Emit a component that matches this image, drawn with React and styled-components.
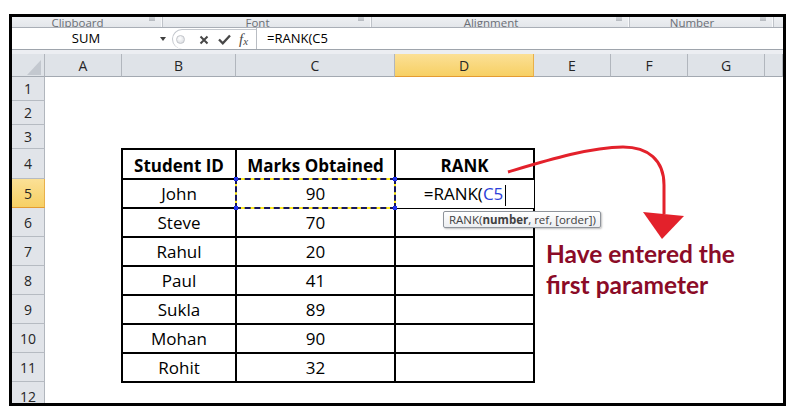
import React from 'react';
import styled, { createGlobalStyle, css } from 'styled-components';

const GlobalStyle = createGlobalStyle`
  html, body { margin: 0; padding: 0; background: #fff; }
  body { font-family: "Open Sans", "Noto Sans", sans-serif; color: #000; }
  *, *::before, *::after { box-sizing: border-box; }
`;

const Page = styled.div`
  position: relative;
  width: 794px;
  height: 415px;
  padding: 14px 0 0 9px;
  overflow: hidden;
`;

const Frame = styled.div`
  width: 777px;
  height: 392px;
  border: 3px solid #000;
  overflow: hidden;
  display: flex;
  flex-direction: column;
  background: #fff;
`;

/* ---------- ribbon group labels (cut off) ---------- */
const RibbonLabels = styled.div`
  flex: none;
  display: grid;
  grid-template-columns: 151px 209px 258px 144px 1fr;
  height: 11px;
  border-bottom: 1px solid #a9aeb6;
  background: linear-gradient(#eef0f3, #e3e6ea);
  overflow: hidden;
`;

const RibbonGroup = styled.div`
  display: flex;
  border-right: ${p => (p.$last ? 'none' : '1px solid #bfc3c9')};
  box-shadow: ${p => (p.$last ? 'none' : 'inset -1px 0 0 #f8f9fb')};
`;

const GroupLabel = styled.div`
  flex: 1;
  align-self: flex-end;
  margin-bottom: 6px;
  text-align: center;
  font-size: 11.5px;
  line-height: 11px;
  color: #6b6f76;
`;

const Launcher = styled.div`
  align-self: flex-start;
  width: 6px;
  height: 4px;
  margin: 0 7px 0 6px;
  background: linear-gradient(#d2d5da, #b5b9bf);
`;

/* ---------- formula bar ---------- */
const FormulaBar = styled.div`
  flex: none;
  display: flex;
  height: 22px;
  border-bottom: 1px solid #9ea4ac;
  background: #fff;
`;

const NameBox = styled.div`
  width: 158px;
  display: flex;
  align-items: center;
`;

const NameText = styled.div`
  flex: 1;
  text-align: center;
  font-size: 13px;
  line-height: 21px;
`;

const DropArrow = styled.div`
  width: 0;
  height: 0;
  border-left: 3.5px solid transparent;
  border-right: 3.5px solid transparent;
  border-top: 4px solid #3f3f3f;
  margin-right: 4px;
`;

const FxArea = styled.div`
  width: 84px;
  display: flex;
  align-items: center;
  margin: 1px 0 0 2px;
  border: 1px solid #c3c7cd;
  border-right: none;
  border-bottom: none;
  border-radius: 11px 0 0 11px;
`;

const Grip = styled.div`
  width: 9px;
  height: 9px;
  margin-left: 3px;
  border-radius: 50%;
  border: 1px solid #c2c5ca;
  background: radial-gradient(circle at 40% 35%, #ffffff, #d3d6db);
`;

const IconSlot = styled.div`
  display: flex;
  align-items: center;
  justify-content: center;
  margin-left: ${p => p.$gap}px;
`;

const FxLabel = styled.span`
  font-family: "Liberation Serif", "DejaVu Serif", serif;
  font-style: italic;
  font-size: 15px;
  color: #4a4a4a;
  line-height: 1;
  sub {
    font-size: 11px;
    vertical-align: -1px;
  }
`;

const FormulaInput = styled.div`
  flex: 1;
  border-left: 1px solid #b9bdc3;
  padding-left: 10px;
  font-size: 13px;
  line-height: 21px;
`;

const Band = styled.div`
  flex: none;
  height: 4px;
  background: #eceef2;
`;

/* ---------- sheet ---------- */
const Sheet = styled.div`
  flex: none;
  display: grid;
  grid-template-columns: 33px 77px 114px 159px 139px 77px 77px 77px 18px;
  grid-template-rows: 23px 24px 24px 24px 30px repeat(8, 29px);
  background: #fff;
`;

const headerBase = css`
  display: flex;
  align-items: center;
  justify-content: center;
  font-size: 14px;
  color: #262626;
  background: #dfe3e8;
`;

const Corner = styled.div`
  ${headerBase};
  grid-row: 1;
  grid-column: 1;
  justify-content: flex-end;
  align-items: flex-end;
  padding: 0 3px 1px 0;
  border-right: 1px solid #b1b6bd;
  border-bottom: 1px solid #a3a9b1;
`;

const ColHeader = styled.div`
  ${headerBase};
  grid-row: 1;
  grid-column: ${p => p.$col};
  border-right: 1px solid #b1b6bd;
  border-bottom: 1px solid #a3a9b1;
  ${p =>
    p.$active &&
    css`
      background: linear-gradient(#fbe096, #f7d064);
      border-right-color: #e8b04a;
      border-bottom: 1px solid #e49b32;
    `}
`;

const RowHeader = styled.div`
  ${headerBase};
  grid-column: 1;
  grid-row: ${p => p.$row};
  background: #e1e4e9;
  border-right: 1px solid #b1b6bd;
  border-bottom: 1px solid #b6bbc2;
  ${p =>
    p.$active &&
    css`
      background: linear-gradient(#fbe096, #f7d064);
      border-bottom: 1px solid #e49b32;
      border-right-color: #e8b04a;
    `}
`;

const DataTable = styled.div`
  grid-column: 3 / 6;
  grid-row: 5 / 13;
  margin: -1px;
  display: grid;
  grid-template-columns: 114px 159px 139px;
  grid-template-rows: 30px repeat(7, 29px);
  border-left: 2px solid #000;
  border-top: 2px solid #000;
`;

const Cell = styled.div`
  position: relative;
  display: flex;
  align-items: center;
  justify-content: center;
  border-right: 2px solid #000;
  border-bottom: 2px solid #000;
  font-size: 17px;
  white-space: nowrap;
  ${p =>
    p.$head &&
    css`
      font-weight: 700;
      padding-top: 2px;
    `}
  ${p =>
    p.$editing &&
    css`
      border-right-width: 1px;
      border-bottom-width: 1px;
    `}
`;

const Marquee = styled.div`
  position: absolute;
  top: -2px;
  left: -2px;
  right: -2px;
  bottom: -2px;
  border: 2px solid #ffec1f;
  pointer-events: none;
  &::after {
    content: '';
    position: absolute;
    inset: -2px;
    border: 2px dashed #16165a;
  }
`;

const Handle = styled.div`
  position: absolute;
  width: 4px;
  height: 4px;
  background: #2233ee;
  z-index: 1;
  ${p => (p.$top ? 'top: -3px;' : 'bottom: -3px;')}
  ${p => (p.$left ? 'left: -3px;' : 'right: -3px;')}
`;

const RefText = styled.span`
  color: #2c3fd9;
`;

const TextCursor = styled.span`
  display: inline-block;
  width: 1px;
  height: 21px;
  margin-left: 2px;
  background: #000;
  vertical-align: middle;
`;

const Tooltip = styled.div`
  position: absolute;
  left: 47px;
  top: 31px;
  z-index: 3;
  white-space: nowrap;
  font-size: 11.5px;
  line-height: 15px;
  padding: 0 4px 0 5px;
  color: #414141;
  background: linear-gradient(#ffffff, #eceef1);
  border: 1px solid #8f949b;
  border-radius: 2px;
  box-shadow: 1px 1px 2px rgba(0, 0, 0, 0.25);
  b {
    font-weight: 700;
  }
`;

/* ---------- annotation ---------- */
const ArrowLayer = styled.svg`
  position: absolute;
  left: 0;
  top: 0;
  pointer-events: none;
`;

const Note = styled.div`
  position: absolute;
  left: 546px;
  top: 238px;
  font-family: Lato, "Open Sans", sans-serif;
  font-weight: 700;
  font-size: 24.5px;
  line-height: 31px;
  color: #8b0b27;
`;

const groups = [
  { label: 'Clipboard' },
  { label: 'Font' },
  { label: 'Alignment' },
  { label: 'Number' },
];

const columns = ['A', 'B', 'C', 'D', 'E', 'F', 'G', ''];

const students = [
  ['John', 90],
  ['Steve', 70],
  ['Rahul', 20],
  ['Paul', 41],
  ['Sukla', 89],
  ['Mohan', 90],
  ['Rohit', 32],
];

export default function App() {
  return (
    <Page>
      <GlobalStyle />
      <Frame>
        <RibbonLabels>
          {groups.map(g => (
            <RibbonGroup key={g.label}>
              <GroupLabel>{g.label}</GroupLabel>
              <Launcher />
            </RibbonGroup>
          ))}
          <RibbonGroup $last />
        </RibbonLabels>

        <FormulaBar>
          <NameBox>
            <NameText>SUM</NameText>
            <DropArrow />
          </NameBox>
          <FxArea>
            <Grip />
            <IconSlot $gap={14}>
              <svg width="10" height="10" viewBox="0 0 10 10">
                <path d="M1.5 1.5 L8.5 8.5 M8.5 1.5 L1.5 8.5" stroke="#474747" strokeWidth="2" />
              </svg>
            </IconSlot>
            <IconSlot $gap={9}>
              <svg width="13" height="11" viewBox="0 0 13 11">
                <path d="M1 5.5 L4.8 9.3 L12 1.5" stroke="#474747" strokeWidth="2.3" fill="none" />
              </svg>
            </IconSlot>
            <IconSlot $gap={8}>
              <FxLabel>
                f<sub>x</sub>
              </FxLabel>
            </IconSlot>
          </FxArea>
          <FormulaInput>=RANK(C5</FormulaInput>
        </FormulaBar>

        <Band />

        <Sheet>
          <Corner>
            <svg width="14" height="15" viewBox="0 0 14 15">
              <polygon points="14,0 14,15 0,15" fill="#c3c8cf" />
            </svg>
          </Corner>
          {columns.map((c, i) => (
            <ColHeader key={i} $col={i + 2} $active={c === 'D'}>
              {c}
            </ColHeader>
          ))}
          {Array.from({ length: 12 }, (_, i) => (
            <RowHeader key={i} $row={i + 2} $active={i + 1 === 5}>
              {i + 1}
            </RowHeader>
          ))}

          <DataTable>
            <Cell $head>Student ID</Cell>
            <Cell $head>Marks Obtained</Cell>
            <Cell $head>RANK</Cell>
            {students.map(([name, marks], i) => (
              <React.Fragment key={name}>
                <Cell>{name}</Cell>
                <Cell>
                  {marks}
                  {i === 0 && (
                    <Marquee>
                      <Handle $top $left />
                      <Handle $top />
                      <Handle $left />
                      <Handle />
                    </Marquee>
                  )}
                </Cell>
                {i === 0 ? (
                  <Cell $editing>
                    <span>
                      =RANK(<RefText>C5</RefText>
                      <TextCursor />
                    </span>
                    <Tooltip>
                      RANK(<b>number</b>, ref, [order])
                    </Tooltip>
                  </Cell>
                ) : (
                  <Cell />
                )}
              </React.Fragment>
            ))}
          </DataTable>
        </Sheet>
      </Frame>

      <ArrowLayer width="794" height="415" viewBox="0 0 794 415">
        <path
          d="M508 172 C545 161 590 147 623 147 C648 147 664 160 664 185 L664 214"
          stroke="#e3212b"
          strokeWidth="3"
          fill="none"
        />
        <polygon points="643,212 684,216 662,239" fill="#e3212b" />
      </ArrowLayer>
      <Note>
        Have entered the
        <br />
        first parameter
      </Note>
    </Page>
  );
}
